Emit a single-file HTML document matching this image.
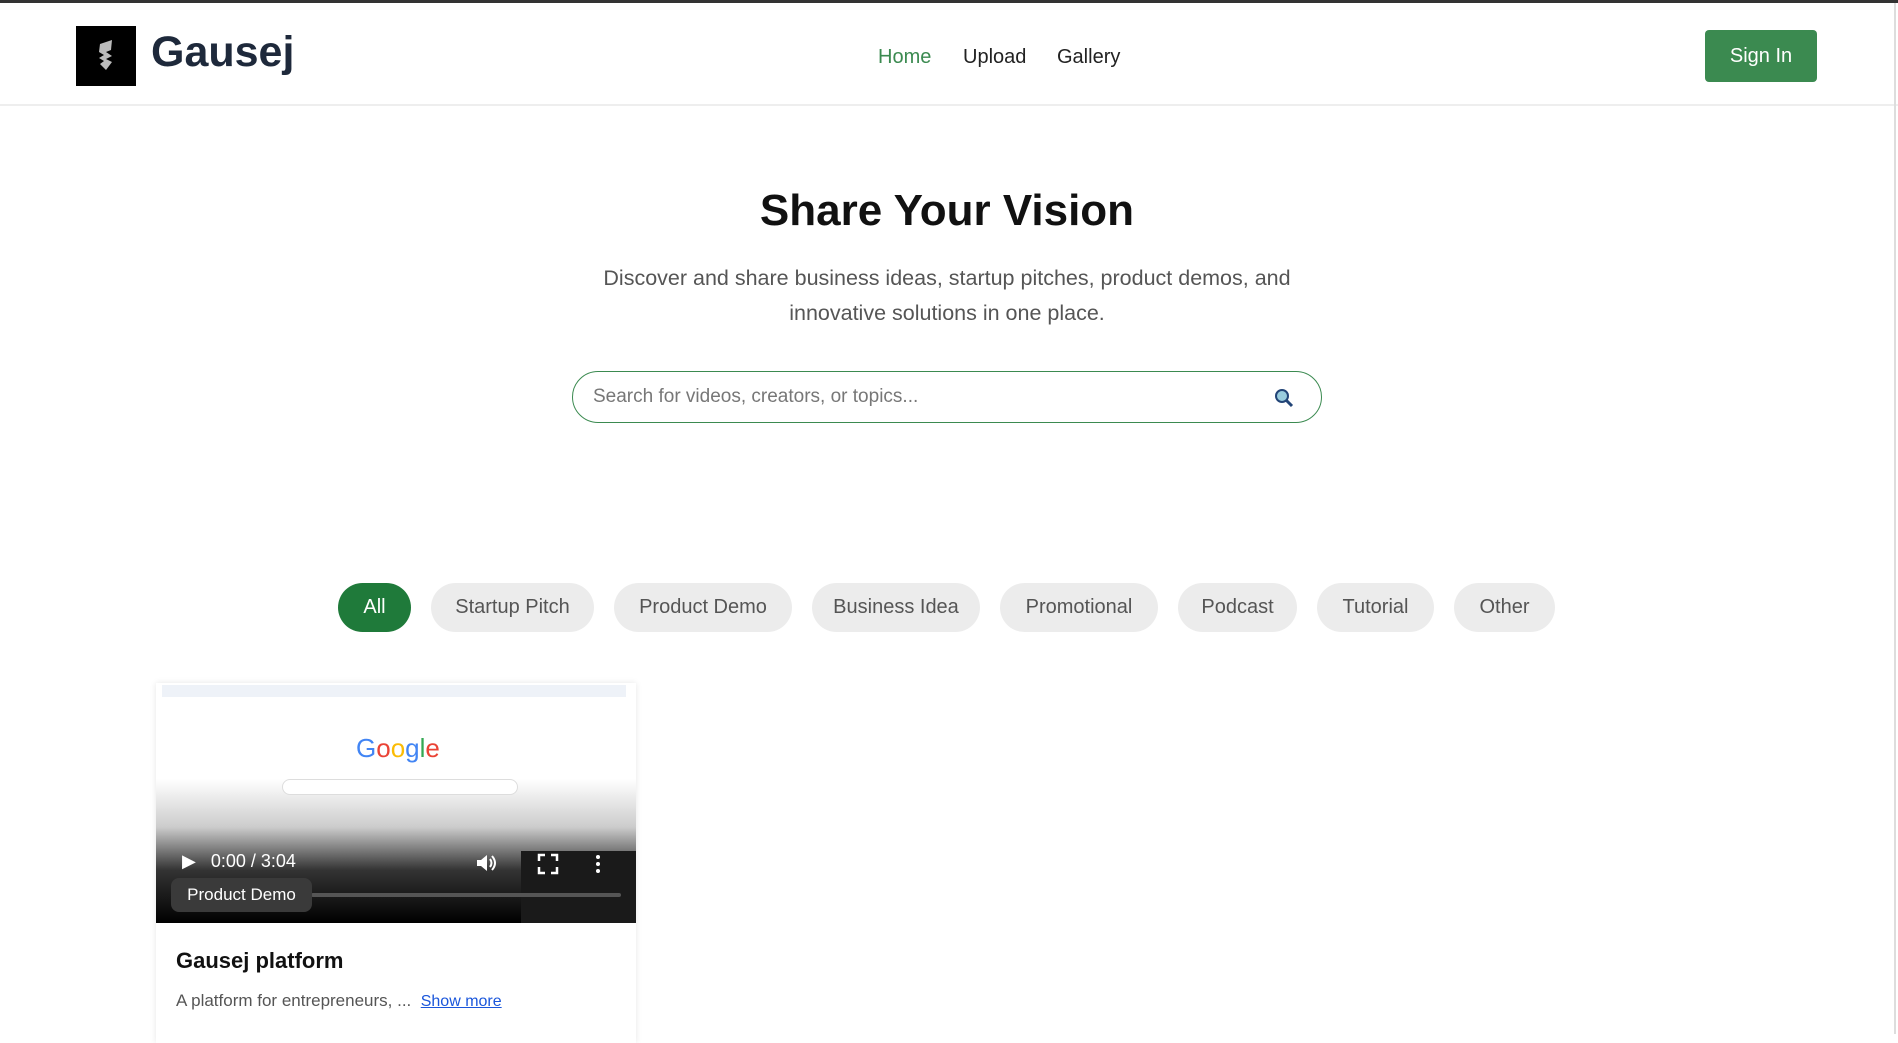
<!DOCTYPE html>
<html><head><meta charset="utf-8"><style>
*{box-sizing:border-box;margin:0;padding:0}
body{width:1898px;height:1031px;overflow:hidden;background:#fff;font-family:"Liberation Sans",sans-serif;position:relative;border-top:3px solid #333}
.hdr{position:absolute;top:3px;left:0;width:1898px;height:100px;border-bottom:2px solid #eee}
.logo{position:absolute;left:76px;top:20px;width:60px;height:60px;background:#000}
.brand{position:absolute;left:151px;top:22px;font-size:43px;font-weight:bold;color:#1e293b}
.nav{position:absolute;top:40px;font-size:20px;color:#222}
.btn{position:absolute;left:1705px;top:24px;width:112px;height:52px;background:#3b8a50;color:#fff;border-radius:4px;font-size:20px;text-align:center;line-height:52px}
h1{position:absolute;top:183px;width:1894px;text-align:center;font-size:44px;color:#111}
.sub{position:absolute;top:258px;left:0;width:1894px;text-align:center;font-size:21.5px;color:#555;line-height:35px}
.search{position:absolute;left:572px;top:368px;width:750px;height:52px;border:1.5px solid #3b8a50;border-radius:26px;font-size:19px;color:#777;padding:14px 0 0 20px}
.pill{position:absolute;top:580px;height:49px;border-radius:25px;background:#ececec;color:#555;font-size:20px;text-align:center;line-height:49px}
.card{position:absolute;left:156px;top:680px;width:480px;height:360px;background:#fff;box-shadow:0 0 6px rgba(0,0,0,.1)}
.vid{position:absolute;left:0;top:0;width:480px;height:240px;background:linear-gradient(#fff 0%,#fff 40%,#ccc 60%,#333 78%,#000 100%)}
</style></head><body>
<div class="hdr">
<div class="logo"><svg width="60" height="60"><path d="M24 18 L36 14 L35 24 L30 26 L36 30 L30 33 L36 36 L30 44 L24 38 L28 35 L23 32 L28 29 L23 26 Z" fill="#bbb"/></svg></div>
<div class="brand">Gausej</div>
<div class="nav" style="left:878px;color:#3b8a50">Home</div>
<div class="nav" style="left:963px">Upload</div>
<div class="nav" style="left:1057px">Gallery</div>
<div class="btn">Sign In</div>
</div>
<h1>Share Your Vision</h1>
<div class="sub">Discover and share business ideas, startup pitches, product demos, and<br>innovative solutions in one place.</div>
<div class="search">Search for videos, creators, or topics...<svg style="position:absolute;right:26px;top:15px" width="22" height="22"><circle cx="9" cy="9" r="6" fill="#9cd" stroke="#247" stroke-width="2"/><path d="M13 13 L19 19" stroke="#247" stroke-width="3"/></svg></div>
<div class="pill" style="left:338px;width:73px;background:#1f7a3a;color:#fff">All</div>
<div class="pill" style="left:431px;width:163px">Startup Pitch</div>
<div class="pill" style="left:614px;width:178px">Product Demo</div>
<div class="pill" style="left:812px;width:168px">Business Idea</div>
<div class="pill" style="left:1000px;width:158px">Promotional</div>
<div class="pill" style="left:1178px;width:119px">Podcast</div>
<div class="pill" style="left:1317px;width:117px">Tutorial</div>
<div class="pill" style="left:1454px;width:101px">Other</div>
<div class="card">
<div class="vid">
<div style="position:absolute;left:6px;top:2px;width:464px;height:12px;background:#eef2f8"></div>
<div style="position:absolute;left:200px;top:50px;font-size:26px;"><span style="color:#4285f4">G</span><span style="color:#ea4335">o</span><span style="color:#fbbc05">o</span><span style="color:#4285f4">g</span><span style="color:#34a853">l</span><span style="color:#ea4335">e</span></div>
<div style="position:absolute;left:126px;top:96px;width:236px;height:16px;border:1px solid #ddd;border-radius:8px;background:#fff"></div>
<div style="position:absolute;left:26px;top:168px;color:#fff;font-size:18px">▶&nbsp;&nbsp;&nbsp;0:00 / 3:04</div>
<svg style="position:absolute;left:318px;top:168px" width="24" height="24"><path d="M3 9h4l6-5v16l-6-5H3z" fill="#fff"/><path d="M16 8q3 4 0 8M18 5q6 7 0 14" stroke="#fff" stroke-width="2" fill="none"/></svg>
<div style="position:absolute;left:365px;top:168px;width:115px;height:72px;background:#1a1a1a"></div>
<svg style="position:absolute;left:381px;top:170px" width="80" height="24"><path d="M2 8V2h6M14 2h6v6M20 14v6h-6M8 20H2v-6" stroke="#fff" stroke-width="2.5" fill="none"/><circle cx="61" cy="4" r="2" fill="#fff"/><circle cx="61" cy="11" r="2" fill="#fff"/><circle cx="61" cy="18" r="2" fill="#fff"/></svg>
<div style="position:absolute;left:155px;top:210px;width:310px;height:4px;background:#555;border-radius:2px"></div>
<div style="position:absolute;left:15px;top:195px;width:141px;height:34px;background:#3a3a3a;border-radius:8px;color:#fff;font-size:17px;text-align:center;line-height:34px">Product Demo</div>
</div>
<div style="position:absolute;left:20px;top:265px;font-size:22px;font-weight:bold;color:#111">Gausej platform</div>
<div style="position:absolute;left:20px;top:308px;font-size:17px;color:#555">A platform for entrepreneurs, ... &nbsp;<span style="color:#1a56db;text-decoration:underline;font-size:16px">Show more</span></div>
</div>
<div style="position:absolute;right:2px;top:0;width:2px;height:1031px;background:#ddd"></div>
</body></html>
